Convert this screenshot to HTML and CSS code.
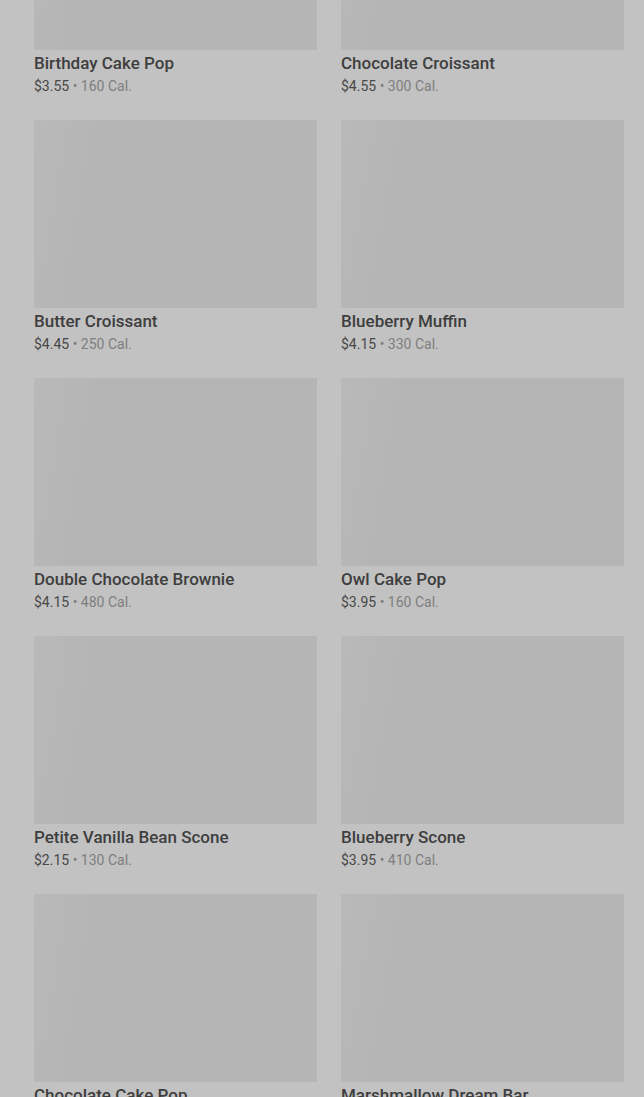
FILE: index.html
```html
<!DOCTYPE html>
<html lang="en">
<head>
  <meta charset="UTF-8">
  <meta name="viewport" content="width=device-width, initial-scale=1.0">
  <title>Bakery</title>
  <link rel="stylesheet" href="styles.css">
</head>
<body>
  <div class="menu-grid">
    <div class="product">
      <div class="thumb"></div>
      <div class="name">Birthday Cake Pop</div>
      <div class="meta"><span class="price">$3.55</span> • 160 Cal.</div>
    </div>
    <div class="product">
      <div class="thumb"></div>
      <div class="name">Chocolate Croissant</div>
      <div class="meta"><span class="price">$4.55</span> • 300 Cal.</div>
    </div>
    <div class="product">
      <div class="thumb"></div>
      <div class="name">Butter Croissant</div>
      <div class="meta"><span class="price">$4.45</span> • 250 Cal.</div>
    </div>
    <div class="product">
      <div class="thumb"></div>
      <div class="name">Blueberry Muffin</div>
      <div class="meta"><span class="price">$4.15</span> • 330 Cal.</div>
    </div>
    <div class="product">
      <div class="thumb"></div>
      <div class="name">Double Chocolate Brownie</div>
      <div class="meta"><span class="price">$4.15</span> • 480 Cal.</div>
    </div>
    <div class="product">
      <div class="thumb"></div>
      <div class="name">Owl Cake Pop</div>
      <div class="meta"><span class="price">$3.95</span> • 160 Cal.</div>
    </div>
    <div class="product">
      <div class="thumb"></div>
      <div class="name">Petite Vanilla Bean Scone</div>
      <div class="meta"><span class="price">$2.15</span> • 130 Cal.</div>
    </div>
    <div class="product">
      <div class="thumb"></div>
      <div class="name">Blueberry Scone</div>
      <div class="meta"><span class="price">$3.95</span> • 410 Cal.</div>
    </div>
    <div class="product">
      <div class="thumb"></div>
      <div class="name">Chocolate Cake Pop</div>
      <div class="meta"><span class="price">$3.55</span> • 160 Cal.</div>
    </div>
    <div class="product">
      <div class="thumb"></div>
      <div class="name">Marshmallow Dream Bar</div>
      <div class="meta"><span class="price">$2.95</span> • 220 Cal.</div>
    </div>
  </div>
</body>
</html>
```

FILE: styles.css
```css
body {
  margin: 0;
  background: #c2c2c2;
  font-family: Roboto, "Liberation Sans", sans-serif;
  overflow: hidden;
}

.menu-grid {
  display: grid;
  grid-template-columns: 1fr 1fr;
  column-gap: 24px;
  row-gap: 23px;
  padding: 0 20px 0 34px;
  margin-top: -138px;
}

.thumb {
  height: 188px;
  background: linear-gradient(100deg, #b9b9b9 0%, #b5b5b5 20%, #b5b5b5 100%);
}

.name {
  margin-top: 2px;
  font-size: 17px;
  line-height: 22px;
  font-weight: 500;
  color: #3e3e3e;
}

.meta {
  padding-top: 1px;
  font-size: 14px;
  line-height: 22px;
  color: #7e7e7e;
}

.price {
  color: #484848;
}
```
